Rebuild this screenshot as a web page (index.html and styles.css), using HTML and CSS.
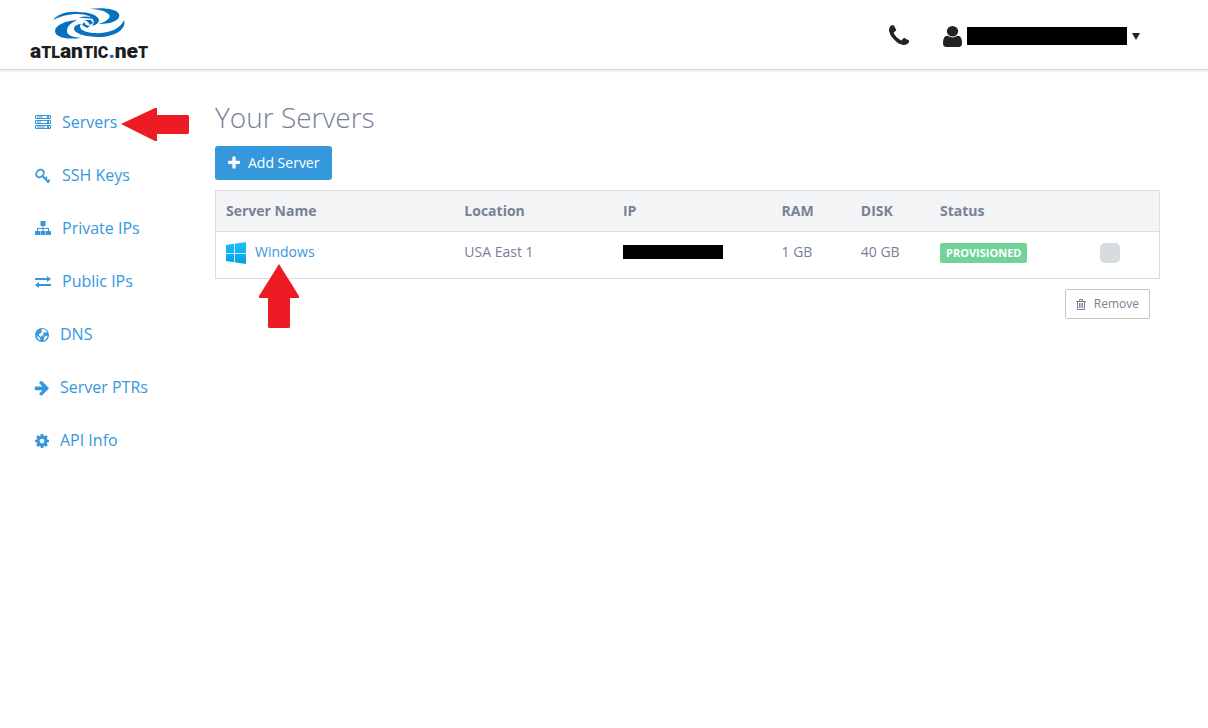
FILE: index.html
```html
<!DOCTYPE html>
<html lang="en">
<head>
<meta charset="utf-8">
<meta name="viewport" content="width=device-width, initial-scale=1">
<title>Your Servers</title>
<link rel="stylesheet" href="styles.css">
</head>
<body>
<header class="topbar">
  <a class="logo" href="#">
    <svg class="logo-mark" viewBox="0 0 72 32" aria-hidden="true">
      <path d="M0 12C5 6 14 3 25 4C36 4 45 7 46 12C46 15 43 17 39 18C42 14 41 11 36 8C27 4 11 6 0 12Z"/>
      <path d="M36 1C50-1 64 1 66 6C68 12 59 16 46 16C55 13 60 8 54 5C50 2 43 1 36 1Z"/>
      <path d="M24 12C12 13 2 17 2 23C2 29 13 32 28 30C19 29 14 27 14 23C14 18 18 15 24 12Z"/>
      <path d="M28 16C25 20 29 24 40 25C54 26 67 22 71 12C74 21 62 29 46 29C32 29 20 25 21 20C22 17 25 16 28 16Z"/>
      <path d="M26 10C31 8 37 8 40 11C36 10 31 10 26 10ZM32 12L38 12L40 15L37 17L35 14ZM31 14L33 17L37 18L34 20L29 17Z"/>
    </svg>
    <span class="logo-text"><span class="low">a</span>TL<span class="low">an</span>TIC<span class="dot low">.</span><span class="low">ne</span>T</span>
  </a>
  <div class="account">
    <button class="icon-button" type="button" aria-label="Phone">
      <svg class="icon-large" viewBox="192 192 1408 1408"><path d="M1600 1240q0 27-10 70.500t-21 68.500q-21 50-122 106-94 51-186 51-27 0-53-3.500t-57.500-12.500-47-14.500-55.500-20.500-49-18q-98-35-175-83-127-79-264-216t-216-264q-48-77-83-175-3-9-18-49t-20.500-55.500-14.500-47-12.500-57.500-3.500-53q0-92 51-186 56-101 106-122 25-11 68.500-21t70.500-10q14 0 21 3 18 6 53 76 11 19 30 54t35 63.500 31 53.500q3 4 17.500 25t21.500 35.500 7 28.500q0 20-28.500 50t-62 55-62 53-28.500 46q0 9 5 22.500t8.500 20.500 14 24 11.500 19q76 137 174 235t235 174q2 1 19 11.500t24 14 20.500 8.500 22.500 5q18 0 46-28.500t53-62 55-62 50-28.500q14 0 28.500 7t35.500 21.500 25 17.500q25 15 53.500 31t63.500 35 54 30q70 35 76 53 3 7 3 21z"/></svg>
    </button>
    <button class="user-menu" type="button" aria-label="Account menu">
      <svg class="icon-user" viewBox="256 128 1280 1536" preserveAspectRatio="none"><path d="M1536 1399q0 109-62.500 187t-150.500 78h-854q-88 0-150.500-78t-62.500-187q0-85 8.500-160.500t31.500-152 58.500-131 94-89 134.500-34.500q131 128 313 128t313-128q76 0 134.500 34.500t94 89 58.500 131 31.500 152 8.500 160.500zm-256-887q0 159-112.500 271.500t-271.500 112.500-271.500-112.500-112.500-271.500 112.500-271.500 271.500-112.500 271.500 112.500 112.500 271.500z"/></svg>
      <span class="redacted redacted-user"></span>
      <svg class="caret" viewBox="0 0 7 6"><path d="M0 0H7L3.500 6Z"/></svg>
    </button>
  </div>
</header>

<div class="page">
  <nav class="sidebar" aria-label="Main">
    <a class="nav-link" href="#">
      <svg class="nav-icon wide" viewBox="0 0 16 16"><path fill="none" stroke="currentColor" d="M.5 1.500h15v3H.5zM.5 6.500h15v3H.5zM.5 11.500h15v3H.5zM2 3h6M2 8h4M2 13h8"/><path d="M12 2h2v2h-2zM12 7h2v2h-2zM12 12h2v2h-2z"/></svg>
      <span>Servers</span>
      <svg class="arrow-left" viewBox="0 0 68 33" aria-hidden="true"><path d="M0 16L34 0H36V7H67L68 8V25L67 26H36V33H34Z"/></svg>
    </a>
    <a class="nav-link" href="#">
      <svg class="nav-icon wide" viewBox="0 0 16 16"><g fill="none" stroke="currentColor" stroke-width="1.800"><ellipse cx="5" cy="6.500" rx="4.200" ry="3.400" transform="rotate(-40 5 6.500)"/><path d="M7.500 9L14 15.500M9.500 12.500L12 10M12 15.500L14.800 12.500"/></g></svg>
      <span>SSH Keys</span>
    </a>
    <a class="nav-link" href="#">
      <svg class="nav-icon wide" viewBox="0 0 16 16"><path d="M6 1h4q.5 0 .5.500v4q0 .5-.5.500H8.500v2h5.500v3h1.500q.5 0 .5.500v3q0 .5-.5.500h-4q-.5 0-.5-.5v-3q0-.5.5-.5h1.500V9H8.500V11H10q.5 0 .5.500v3q0 .5-.5.500H6q-.5 0-.5-.5v-3q0-.5.5-.5h1.500V9H3V11h1.500q.5 0 .5.500v3q0 .5-.5.500h-4Q0 15 0 14.500v-3Q0 11 .5 11H2V8h5.500V6H6q-.5 0-.5-.5v-4Q5.500 1 6 1Z"/></svg>
      <span>Private IPs</span>
    </a>
    <a class="nav-link" href="#">
      <svg class="nav-icon wide" viewBox="0 0 16 16"><path d="M0 5H12V3L16 6L12 9V7H0ZM16 13H4V15L0 12L4 9V11H16Z"/></svg>
      <span>Public IPs</span>
    </a>
    <a class="nav-link" href="#">
      <svg class="nav-icon" viewBox="0 0 14 14"><circle cx="7" cy="7" r="7"/><path class="land" d="M6 1.500L9 1L12 3.500L11 5L9.500 4L8 5.500L9 7L7 7.500L6 9L4.500 8L3.500 6.500L5 5.500L7 4L6.500 2.500ZM1.500 7L3.500 9L5 10L5.500 12.500L3 11ZM9.500 8.500L12 7.500L12.500 9L10 12L8.500 12.500Z"/></svg>
      <span>DNS</span>
    </a>
    <a class="nav-link" href="#">
      <svg class="nav-icon" viewBox="160 192 1472 1472"><path d="M1600 960q0 54-37 91l-651 651q-39 37-91 37-51 0-90-37l-75-75q-38-38-38-91t38-91l293-293h-704q-52 0-84.500-37.500t-32.500-90.500v-128q0-53 32.500-90.500t84.500-37.500h704l-293-294q-38-36-38-90t38-90l75-75q38-38 90-38 53 0 91 38l651 651q37 35 37 90z"/></svg>
      <span>Server PTRs</span>
    </a>
    <a class="nav-link" href="#">
      <svg class="nav-icon" viewBox="128 128 1536 1536"><path d="M1152 896q0-106-75-181t-181-75-181 75-75 181 75 181 181 75 181-75 75-181zm512-109v222q0 12-8 23t-20 13l-185 28q-19 54-39 91 35 50 107 138 10 12 10 25t-9 23q-27 37-99 108t-94 71q-12 0-26-9l-138-108q-44 23-91 38-16 136-29 186-7 28-36 28h-222q-14 0-24.500-8.500t-11.500-21.500l-28-184q-49-16-90-37l-141 107q-10 9-25 9-14 0-25-11-126-114-165-168-7-10-7-23 0-12 8-23 15-21 51-66.500t54-70.500q-27-50-41-99l-183-27q-13-2-21-12.500t-8-23.500v-222q0-12 8-23t19-13l186-28q14-46 39-92-40-57-107-138-10-12-10-24 0-10 9-23 26-36 98.500-107.500t94.500-71.500q13 0 26 10l138 107q44-23 91-38 16-136 29-186 7-28 36-28h222q14 0 24.500 8.500t11.500 21.500l28 184q49 16 90 37l142-107q9-9 24-9 13 0 25 10 129 119 165 170 7 8 7 22 0 12-8 23-15 21-51 66.500t-54 70.500q26 50 41 98l183 28q13 2 21 12.500t8 23.500z"/></svg>
      <span>API Info</span>
    </a>
  </nav>

  <main class="content">
    <h1>Your Servers</h1>
    <button class="button-primary" type="button">
      <svg class="plus" viewBox="192 192 1408 1408"><path d="M1600 736v192q0 40-28 68t-68 28h-416v416q0 40-28 68t-68 28h-192q-40 0-68-28t-28-68v-416h-416q-40 0-68-28t-28-68v-192q0-40 28-68t68-28h416v-416q0-40 28-68t68-28h192q40 0 68 28t28 68v416h416q40 0 68 28t28 68z"/></svg>
      <span>Add Server</span>
    </button>
    <table class="servers">
      <colgroup>
        <col class="col-name"><col class="col-medium"><col class="col-medium"><col class="col-small"><col class="col-small"><col class="col-status"><col>
      </colgroup>
      <thead>
        <tr><th>Server Name</th><th>Location</th><th>IP</th><th>RAM</th><th>DISK</th><th>Status</th><th></th></tr>
      </thead>
      <tbody>
        <tr>
          <td>
            <a class="server-link" href="#">
              <svg class="windows" viewBox="0 0 20 22"><defs><linearGradient id="sky" x2="0" y2="1"><stop offset="0" stop-color="#1cc0fa"/><stop offset="1" stop-color="#00a0e3"/></linearGradient></defs><path fill="url(#sky)" d="M0 3L20 0V22L0 19Z"/><path class="pane" d="M8.500 1V21M0 11.500H20"/></svg>
              <span class="server-name">Windows<svg class="arrow-up" viewBox="0 0 40 64" aria-hidden="true"><path d="M20 0L40 32V34H31V63L30 64H10L9 63V34H0V32Z"/></svg></span>
            </a>
          </td>
          <td>USA East 1</td>
          <td><span class="redacted redacted-ip"></span></td>
          <td>1 GB</td>
          <td>40 GB</td>
          <td><span class="badge">PROVISIONED</span></td>
          <td class="select-cell"><input class="check" type="checkbox" aria-label="Select Windows"></td>
        </tr>
      </tbody>
    </table>
    <div class="actions">
      <button class="button-plain" type="button">
        <svg class="trash" viewBox="0 0 10 11"><path fill="none" stroke="currentColor" d="M0 2.500H10M3.500 2V.5H6.500V2M1.500 2.500V10.500H8.500V2.500M3.500 4V9M5 4V9M6.500 4V9"/></svg>
        <span>Remove</span>
      </button>
    </div>
  </main>
</div>
</body>
</html>
```

FILE: styles.css
```css
* { box-sizing: border-box; }

body {
  margin: 0;
  background: #fff;
  color: #788195;
  font: 14px/20px "Open Sans", "Noto Sans", sans-serif;
}

svg { display: block; flex: none; fill: currentColor; overflow: visible; }
a { color: #3598dc; text-decoration: none; }
button { font: inherit; cursor: pointer; }

.topbar {
  display: flex;
  align-items: center;
  justify-content: space-between;
  height: 70px;
  padding: 3px 68px 0 30px;
  border-bottom: 1px solid #d5d5d5;
  box-shadow: 0 1px 2px #e4e4e4;
}

.logo { display: flex; flex-direction: column; align-items: center; color: #1c1c1c; }
.logo-mark { width: 72px; height: 32px; color: #0671c1; }
.logo-text { font: 900 16px/22px Roboto, "Liberation Sans", sans-serif; white-space: nowrap; }
.logo-text .low { font-size: 21px; }
.logo-text .dot { color: #0671c1; }

.account { display: flex; align-items: center; gap: 34px; }
.icon-button, .user-menu { padding: 0; border: 0; background: none; color: #222; }
.icon-large { width: 20px; height: 20px; }
.user-menu { display: flex; align-items: center; gap: 5px; }
.icon-user { width: 19px; height: 21px; }
.caret { width: 8px; height: 7px; }

.redacted { display: block; background: #000; }
.redacted-user { width: 160px; height: 18px; }
.redacted-ip { width: 100px; height: 14px; margin-top: 3px; }

.page { display: flex; padding: 25px 48px 0 35px; }

.sidebar { display: flex; flex-direction: column; width: 180px; flex: none; }
.nav-link {
  position: relative;
  display: flex;
  align-items: center;
  align-self: flex-start;
  gap: 11px;
  height: 53px;
  font-size: 16px;
}
.nav-icon { width: 14px; height: 14px; margin-top: 3px; }
.nav-icon.wide { width: 16px; height: 16px; margin-top: 1px; }
.land { fill: #fff; }

.arrow-left, .arrow-up { position: absolute; color: #ed1c24; }
.arrow-left { left: calc(100% + 4px); top: 13px; width: 68px; height: 33px; }
.arrow-up { left: 4px; top: 22px; width: 40px; height: 64px; }

.content { flex: 1; min-width: 0; padding-top: 2px; }

h1 { margin: 0 0 9px; font-size: 28px; font-weight: 300; line-height: 40px; }

.button-primary {
  display: flex;
  align-items: center;
  gap: 8px;
  height: 34px;
  padding: 0 13px;
  border: 0;
  border-radius: 3px;
  background: #3598dc;
  color: #fff;
}
.plus { width: 12px; height: 12px; }

.servers {
  width: 100%;
  margin-top: 10px;
  border: 1px solid #ddd;
  border-collapse: collapse;
  table-layout: fixed;
}
.servers th, .servers td { padding: 10px; text-align: left; vertical-align: top; }
.servers th { background: #f3f4f6; border-bottom: 1px solid #ddd; font-weight: 700; }
.servers td { height: 47px; padding-bottom: 0; }
.col-name { width: 25.3%; }
.col-medium { width: 16.8%; }
.col-small { width: 8.4%; }
.col-status { width: 13.8%; }

.server-link { display: inline-flex; gap: 9px; }
.windows { width: 20px; height: 22px; }
.pane { fill: none; stroke: #c9effc; }
.server-name { position: relative; }

.badge {
  display: inline-block;
  margin-top: 1px;
  padding: 0 6px;
  border-radius: 2px;
  background: #71d398;
  color: #fff;
  font-size: 11px;
  font-weight: 700;
}

.servers .select-cell { text-align: center; }
.check { appearance: none; width: 20px; height: 20px; margin: 1px 0 0; border-radius: 5px; background: #d7dcdf; }
.check:checked { background: #3598dc; }

.actions { display: flex; justify-content: flex-end; padding: 10px 10px 0 0; }
.button-plain {
  display: flex;
  align-items: center;
  gap: 8px;
  height: 30px;
  padding: 0 10px;
  border: 1px solid #c6c6c6;
  border-radius: 2px;
  background: #fff;
  color: #788195;
  font-size: 12px;
}
.trash { width: 10px; height: 11px; }
```
